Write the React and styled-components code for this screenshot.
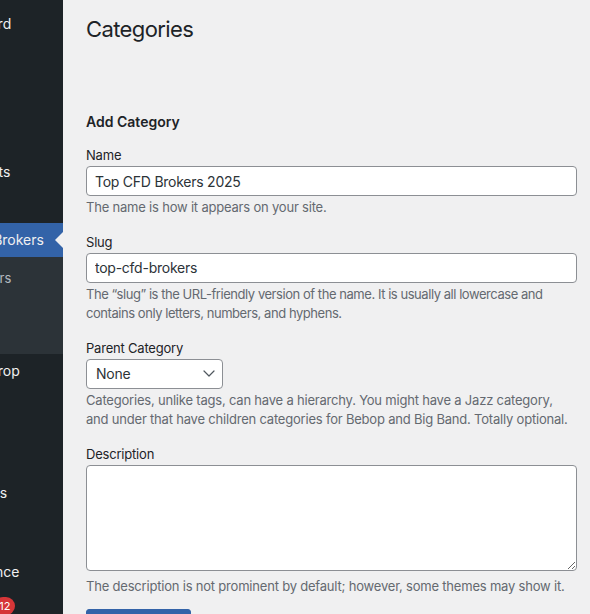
import React from "react";
import styled, { createGlobalStyle } from "styled-components";

const GlobalStyle = createGlobalStyle`
  html, body {
    margin: 0;
    padding: 0;
    background: #f0f0f1;
    font-family: "Inter", "Noto Sans", sans-serif;
    color: #1d2327;
  }
`;

const font = `"Inter", "Noto Sans", sans-serif`;

const menu = [
  { type: "item", label: "Dashboard" },
  { type: "sep", height: 12 },
  { type: "item", label: "Posts" },
  { type: "item", label: "Media" },
  { type: "item", label: "Pages" },
  { type: "item", label: "Comments" },
  { type: "item", label: "Users" },
  { type: "item", label: "Trading Brokers", active: true },
  { type: "sub", items: ["All CFD Brokers", "Add New", "Categories"] },
  { type: "item", label: "Drag & Drop" },
  { type: "item", label: "Forms" },
  { type: "item", label: "SEO" },
  { type: "sep", height: 20 },
  { type: "item", label: "Templates" },
  { type: "sep", height: 11 },
  { type: "item", label: "Links" },
  { type: "item", label: "Appearance" },
  { type: "item", label: "Plugins", badge: "12" },
];

function App() {
  return (
    <>
      <GlobalStyle />
      <Page>
        <MenuWindow>
          <Menu>
            {menu.map((entry, i) => {
              if (entry.type === "sep") {
                return <Separator key={i} $height={entry.height} />;
              }
              if (entry.type === "sub") {
                return (
                  <SubMenu key={i}>
                    {entry.items.map((s) => (
                      <SubItem key={s}>{s}</SubItem>
                    ))}
                  </SubMenu>
                );
              }
              return (
                <MenuItem key={i} $active={entry.active}>
                  <span>{entry.label}</span>
                  {entry.badge && <Badge>{entry.badge}</Badge>}
                  {entry.active && <Arrow />}
                </MenuItem>
              );
            })}
          </Menu>
        </MenuWindow>
        <Content>
          <Title>Categories</Title>
          <FormWrap>
            <FormTitle>Add Category</FormTitle>
            <Field>
              <Label>Name</Label>
              <TextInput defaultValue="Top CFD Brokers 2025" readOnly />
              <Help>The name is how it appears on your site.</Help>
            </Field>
            <Field>
              <Label>Slug</Label>
              <TextInput defaultValue="top-cfd-brokers" readOnly />
              <Help $tight>
                The “slug” is the URL-friendly version of the name. It is usually
                all lowercase and contains only letters, numbers, and hyphens.
              </Help>
            </Field>
            <Field>
              <Label>Parent Category</Label>
              <SelectBox>
                <span>None</span>
                <svg width="12" height="7" viewBox="0 0 12 7" fill="none">
                  <path
                    d="M1 1l5 5 5-5"
                    stroke="#50575e"
                    strokeWidth="1.2"
                    strokeLinecap="round"
                    strokeLinejoin="round"
                  />
                </svg>
              </SelectBox>
              <Help>
                Categories, unlike tags, can have a hierarchy. You might have a
                Jazz category, and under that have children categories for Bebop
                and Big Band. Totally optional.
              </Help>
            </Field>
            <Field $spacing={13}>
              <Label>Description</Label>
              <TextArea readOnly />
              <Help>
                The description is not prominent by default; however, some themes
                may show it.
              </Help>
            </Field>
            <PrimaryButton>Add New Category</PrimaryButton>
          </FormWrap>
        </Content>
      </Page>
    </>
  );
}

const Page = styled.div`
  display: flex;
  width: 590px;
  height: 614px;
  overflow: hidden;
`;

const MenuWindow = styled.div`
  width: 63px;
  flex-shrink: 0;
  background: #1d2327;
  overflow: hidden;
`;

const Menu = styled.div`
  width: 160px;
  margin-left: -97px;
  padding-top: 7px;
  display: flex;
  flex-direction: column;
`;

const Separator = styled.div`
  height: ${(p) => p.$height}px;
`;

const MenuItem = styled.div`
  position: relative;
  display: flex;
  align-items: center;
  height: 34px;
  padding-left: 36px;
  box-sizing: border-box;
  font-size: 14px;
  line-height: 18px;
  white-space: nowrap;
  color: #f0f0f1;
  background: ${(p) => (p.$active ? "#3363a8" : "transparent")};
`;

const Arrow = styled.div`
  position: absolute;
  right: 0;
  top: 50%;
  margin-top: -8px;
  width: 0;
  height: 0;
  border-top: 8px solid transparent;
  border-bottom: 8px solid transparent;
  border-right: 8px solid #f0f0f1;
`;

const Badge = styled.span`
  display: inline-block;
  margin-left: 7px;
  min-width: 18px;
  height: 18px;
  padding: 0 5px;
  box-sizing: border-box;
  border-radius: 9px;
  background: #d63638;
  color: #fff;
  font-size: 11px;
  line-height: 18px;
  text-align: center;
`;

const SubMenu = styled.div`
  background: #2c3338;
  padding: 7px 0 6px;
  display: flex;
  flex-direction: column;
`;

const SubItem = styled.div`
  height: 28px;
  padding: 5px 12px;
  box-sizing: border-box;
  font-size: 13px;
  line-height: 18px;
  white-space: nowrap;
  color: rgba(240, 246, 252, 0.7);
`;

const Content = styled.div`
  flex: 1;
  padding: 14px 13px 0 23px;
  min-width: 0;
`;

const Title = styled.h1`
  margin: 0;
  font-size: 22px;
  font-weight: 400;
  letter-spacing: -0.6px;
  line-height: 30px;
  color: #1d2327;
`;

const FormWrap = styled.div`
  margin-top: 69px;
  display: flex;
  flex-direction: column;
`;

const FormTitle = styled.h2`
  margin: 0 0 15px;
  font-size: 14px;
  font-weight: 600;
  line-height: 18px;
  color: #1d2327;
`;

const Field = styled.div`
  display: flex;
  flex-direction: column;
  align-items: stretch;
  margin-bottom: ${(p) => p.$spacing ?? 15}px;
`;

const Label = styled.label`
  align-self: flex-start;
  font-size: 13px;
  line-height: 18px;
  letter-spacing: -0.2px;
  margin-bottom: 2px;
  color: #1d2327;
`;

const TextInput = styled.input`
  width: 100%;
  height: 30px;
  box-sizing: border-box;
  padding: 0 8px;
  border: 1px solid #8c8f94;
  border-radius: 4px;
  background: #fff;
  font-family: ${font};
  font-size: 14px;
  letter-spacing: -0.25px;
  color: #2c3338;
  outline: none;
`;

const SelectBox = styled.div`
  align-self: flex-start;
  width: 137px;
  height: 30px;
  box-sizing: border-box;
  display: flex;
  align-items: center;
  justify-content: space-between;
  padding: 0 7px 0 9px;
  border: 1px solid #8c8f94;
  border-radius: 4px;
  background: #fff;
  font-size: 14px;
  letter-spacing: -0.25px;
  color: #2c3338;
`;

const TextArea = styled.textarea`
  width: 100%;
  height: 106px;
  box-sizing: border-box;
  border: 1px solid #8c8f94;
  border-radius: 4px;
  background: #fff;
  font-family: ${font};
  font-size: 14px;
  outline: none;
  margin: 0 0 4px;
`;

const Help = styled.p`
  margin: 2px 0 0;
  font-size: 13px;
  line-height: 19.5px;
  letter-spacing: ${(p) => (p.$tight ? "-0.45px" : "-0.2px")};
  color: #646970;
`;

const PrimaryButton = styled.button`
  align-self: flex-start;
  flex-shrink: 0;
  width: 105px;
  height: 36px;
  padding: 8px 0 0;
  border: 1px solid #3363a8;
  border-radius: 3px;
  background: #3363a8;
  color: #fff;
  font-family: ${font};
  font-size: 13px;
  line-height: 26px;
`;

export default App;
